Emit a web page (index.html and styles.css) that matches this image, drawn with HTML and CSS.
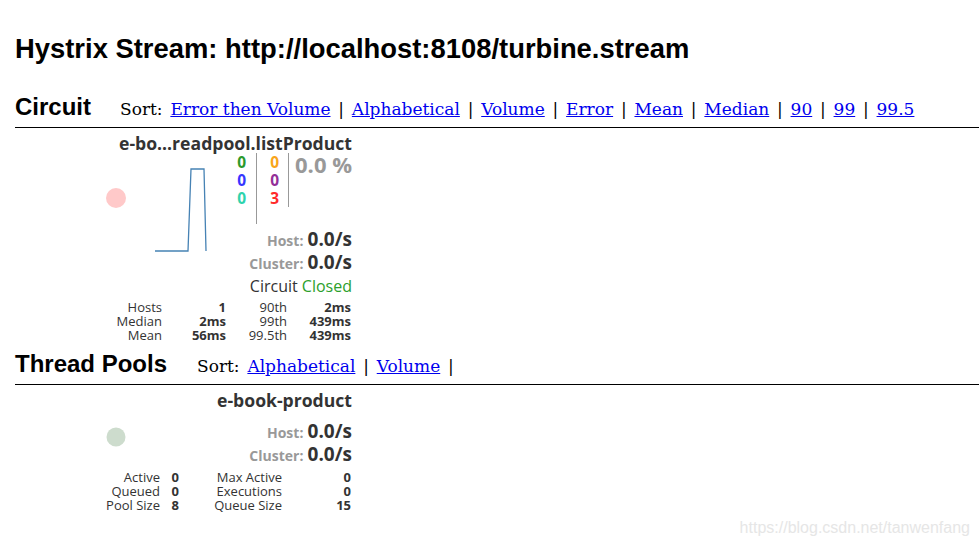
FILE: index.html
```html
<!DOCTYPE html>
<html lang="en">
<head>
    <meta charset="UTF-8">
    <title>Hystrix Monitor</title>
    <link rel="stylesheet" href="styles.css">
</head>
<body>
    <div class="dashboard">
        <h1 class="stream-title">Hystrix Stream: http://localhost:8108/turbine.stream</h1>

        <div class="section-header">
            <h2>Circuit</h2>
            <div class="sort">Sort:
                <a href="#">Error then Volume</a> |
                <a href="#">Alphabetical</a> |
                <a href="#">Volume</a> |
                <a href="#">Error</a> |
                <a href="#">Mean</a> |
                <a href="#">Median</a> |
                <a href="#">90</a> |
                <a href="#">99</a> |
                <a href="#">99.5</a>
            </div>
        </div>

        <div class="monitor">
            <div class="monitor-name">e-bo...readpool.listProduct</div>
            <div class="monitor-body">
                <svg class="chart" width="215" height="145" viewBox="0 0 215 145">
                    <circle cx="101" cy="45" r="10" fill="#ffc9c9"/>
                    <path d="M140 98 H173 L176 16 H189 L191 98" fill="none" stroke="#4682b4" stroke-width="1.3"/>
                </svg>
                <div class="monitor-data">
                    <div class="counters">
                        <div class="counter-col first">
                            <span class="c-success">0</span>
                            <span class="c-short">0</span>
                            <span class="c-bad">0</span>
                        </div>
                        <div class="counter-col second">
                            <span class="c-timeout">0</span>
                            <span class="c-rejected">0</span>
                            <span class="c-failure">3</span>
                        </div>
                        <div class="error-pct">0.0 %</div>
                    </div>
                    <div class="rate first-rate"><span class="rate-label">Host:</span> <span class="rate-value">0.0/s</span></div>
                    <div class="rate"><span class="rate-label">Cluster:</span> <span class="rate-value">0.0/s</span></div>
                    <div class="circuit-status">Circuit <span class="closed">Closed</span></div>
                </div>
            </div>
            <div class="stats circuit-stats">
                <span class="label">Hosts</span><span class="value">1</span><span class="label">90th</span><span class="value">2ms</span>
                <span class="label">Median</span><span class="value">2ms</span><span class="label">99th</span><span class="value">439ms</span>
                <span class="label">Mean</span><span class="value">56ms</span><span class="label">99.5th</span><span class="value">439ms</span>
            </div>
        </div>

        <div class="section-header pools">
            <h2>Thread Pools</h2>
            <div class="sort">Sort:
                <a href="#">Alphabetical</a> |
                <a href="#">Volume</a> |
            </div>
        </div>

        <div class="monitor pool">
            <div class="monitor-name">e-book-product</div>
            <div class="monitor-body">
                <svg class="chart" width="215" height="56" viewBox="0 0 215 56">
                    <circle cx="101" cy="27" r="9.5" fill="#cddccd"/>
                </svg>
                <div class="monitor-data pool-data">
                    <div class="rate"><span class="rate-label">Host:</span> <span class="rate-value">0.0/s</span></div>
                    <div class="rate"><span class="rate-label">Cluster:</span> <span class="rate-value">0.0/s</span></div>
                </div>
            </div>
            <div class="stats pool-stats">
                <span class="label">Active</span><span class="value">0</span><span class="label">Max Active</span><span class="value">0</span>
                <span class="label">Queued</span><span class="value">0</span><span class="label">Executions</span><span class="value">0</span>
                <span class="label">Pool Size</span><span class="value">8</span><span class="label">Queue Size</span><span class="value">15</span>
            </div>
        </div>
    </div>

    <div class="watermark">https://blog.csdn.net/tanwenfang</div>
</body>
</html>
```

FILE: styles.css
```css
body {
    margin: 0;
    padding: 0;
    background-color: white;
    color: black;
    font-family: "Liberation Sans", Arial, sans-serif;
}

.dashboard {
    padding-left: 15px;
}

.stream-title {
    margin: 34px 0 0 0;
    font-size: 27.4px;
    line-height: 30px;
    font-weight: bold;
}

.section-header {
    display: flex;
    align-items: baseline;
    margin-top: 29px;
    padding-bottom: 6px;
    border-bottom: 1px solid black;
}

.section-header h2 {
    margin: 0;
    font-size: 24px;
    line-height: 28px;
    width: 105px;
}

.section-header.pools {
    margin-top: 8px;
}

.section-header.pools h2 {
    width: 182px;
}

.sort {
    font-family: "DejaVu Serif", serif;
    font-size: 17px;
    line-height: 20px;
    word-spacing: 2.4px;
}

.sort a {
    color: #0000ee;
    word-spacing: 0;
}

/* monitor box */
.monitor {
    width: 337px;
    font-family: "Open Sans", sans-serif;
    color: #333;
    margin-top: 5px;
}

.monitor-name {
    text-align: right;
    font-size: 17.6px;
    font-weight: bold;
    line-height: 20px;
}

.monitor-body {
    display: flex;
}

.chart {
    flex: none;
}

.monitor-data {
    flex: 1;
    text-align: right;
}

.pool-data {
    padding-top: 10px;
}

.counters {
    display: flex;
    align-items: flex-start;
    font-weight: bold;
    font-size: 15.5px;
    line-height: 18px;
}

.counter-col {
    display: flex;
    flex-direction: column;
    align-items: flex-end;
    border-right: 1px solid #999;
}

.counter-col.first {
    width: 16px;
    padding-right: 10px;
    padding-bottom: 17px;
}

.counter-col.second {
    width: 22px;
    padding-right: 9px;
}

.error-pct {
    flex: 1;
    color: #999;
    font-size: 22px;
    line-height: 22px;
}

.c-success { color: #2c9a2c; }
.c-short { color: #3636ff; }
.c-bad { color: #2ed3ad; }
.c-timeout { color: #f9a51a; }
.c-rejected { color: #932f98; }
.c-failure { color: #ff2b2b; }

.rate {
    height: 23px;
    line-height: 23px;
}

.first-rate {
    margin-top: 4px;
}

.rate-label {
    color: #999;
    font-size: 14px;
    font-weight: bold;
}

.rate-value {
    font-size: 19px;
    font-weight: bold;
}

.circuit-status {
    font-size: 16px;
    line-height: 24px;
}

.closed {
    color: #2ca02c;
}

.stats {
    display: grid;
    font-size: 13px;
    line-height: 14px;
    text-align: right;
}

.circuit-stats {
    grid-template-columns: 147px 64px 61px 64px;
    margin-top: 2px;
}

.pool-stats {
    grid-template-columns: 145px 19px 103px 69px;
    margin-top: 4px;
}

.stats .value {
    font-weight: bold;
}

.watermark {
    position: absolute;
    right: 9px;
    bottom: 9px;
    font-family: "Liberation Sans", Arial, sans-serif;
    font-size: 16px;
    color: #e6e6e6;
}
```
